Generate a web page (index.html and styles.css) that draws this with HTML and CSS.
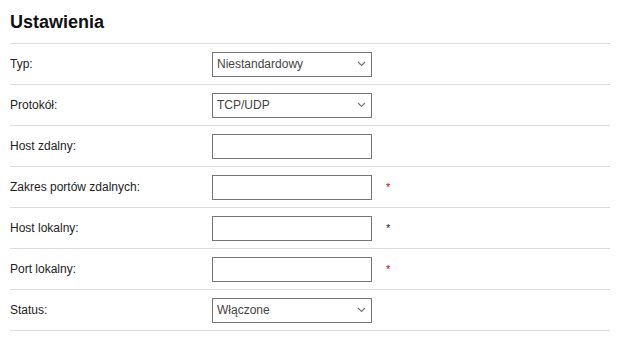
FILE: index.html
```html
<!DOCTYPE html>
<html lang="pl">
<head>
    <meta charset="UTF-8">
    <title>Ustawienia</title>
    <link rel="stylesheet" href="styles.css">
</head>
<body>
    <div class="panel">
        <h2>Ustawienia</h2>
        <div class="row">
            <label>Typ:</label>
            <select><option>Niestandardowy</option></select>
        </div>
        <div class="row">
            <label>Protokół:</label>
            <select><option>TCP/UDP</option></select>
        </div>
        <div class="row">
            <label>Host zdalny:</label>
            <input type="text">
        </div>
        <div class="row">
            <label>Zakres portów zdalnych:</label>
            <input type="text">
            <span class="req">*</span>
        </div>
        <div class="row">
            <label>Host lokalny:</label>
            <input type="text">
            <span class="req dark">*</span>
        </div>
        <div class="row">
            <label>Port lokalny:</label>
            <input type="text">
            <span class="req">*</span>
        </div>
        <div class="row">
            <label>Status:</label>
            <select><option>Włączone</option></select>
        </div>
    </div>
</body>
</html>
```

FILE: styles.css
```css
body {
    margin: 0;
    font-family: "Liberation Sans", Arial, sans-serif;
    font-size: 12px;
    color: #222;
    background: #fff;
}
.panel {
    width: 600px;
    margin-left: 10px;
}
h2 {
    margin: 0;
    height: 43px;
    line-height: 44px;
    font-size: 18px;
    font-weight: bold;
    color: #111;
    border-bottom: 1px solid #ddd;
}
.row {
    display: flex;
    align-items: center;
    height: 40px;
    border-bottom: 1px solid #ddd;
}
label {
    width: 202px;
    flex: none;
}
select, input {
    box-sizing: border-box;
    width: 160px;
    height: 25px;
    border: 1px solid #767676;
    border-radius: 0;
    background: #fff;
    font-family: "Liberation Sans", Arial, sans-serif;
    font-size: 12px;
    color: #444;
}
select {
    appearance: none;
    padding: 0 20px 0 4px;
    background-image: url("data:image/svg+xml,%3Csvg xmlns='http://www.w3.org/2000/svg' width='9' height='6'%3E%3Cpath d='M1 1l3.5 3.5L8 1' fill='none' stroke='%23777' stroke-width='1.2'/%3E%3C/svg%3E");
    background-repeat: no-repeat;
    background-position: right 5px center;
}
input {
    padding: 0 4px;
}
.req {
    margin-left: 14px;
    color: #c00;
    font-size: 11px;
}
.req.dark {
    color: #222;
}
```
